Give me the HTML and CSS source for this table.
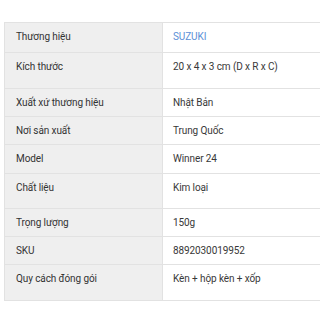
FILE: index.html
```html
<!DOCTYPE html>
<html lang="vi">
<head>
<meta charset="utf-8">
<link rel="stylesheet" href="styles.css">
</head>
<body>
<div class="specs">
  <div class="row r29"><div class="label">Thương hiệu</div><div class="value link">SUZUKI</div></div>
  <div class="row r36"><div class="label">Kích thước</div><div class="value">20 x 4 x 3 cm (D x R x C)</div></div>
  <div class="row r28"><div class="label">Xuất xứ thương hiệu</div><div class="value">Nhật Bản</div></div>
  <div class="row r28"><div class="label">Nơi sản xuất</div><div class="value">Trung Quốc</div></div>
  <div class="row r29"><div class="label">Model</div><div class="value">Winner 24</div></div>
  <div class="row r35"><div class="label">Chất liệu</div><div class="value">Kim loại</div></div>
  <div class="row r28"><div class="label">Trọng lượng</div><div class="value">150g</div></div>
  <div class="row r28"><div class="label">SKU</div><div class="value">8892030019952</div></div>
  <div class="row r36"><div class="label">Quy cách đóng gói</div><div class="value">Kèn + hộp kèn + xốp</div></div>
</div>
</body>
</html>
```
FILE: styles.css
```css
html, body {
  margin: 0;
  padding: 0;
  background: #ffffff;
}
body {
  padding: 22px 0 0 4px;
  font-family: Roboto, "Noto Sans", sans-serif;
  font-size: 10px;
  letter-spacing: -0.1px;
  overflow: hidden;
}
.specs {
  width: 330px;
  border: 1px solid #e2e2e2;
  border-right: none;
}
.row {
  display: flex;
  border-top: 1px solid #e2e2e2;
  box-sizing: border-box;
}
.row:first-child {
  border-top: none;
}
.r28 { height: 28px; }
.r29 { height: 29px; }
.r35 { height: 35px; }
.r36 { height: 36px; }
.label {
  width: 158px;
  flex: none;
  background: #efefef;
  border-right: 1px solid #e2e2e2;
  color: #333333;
  padding: 7px 0 0 11px;
  box-sizing: border-box;
  line-height: 13px;
}
.value {
  flex: 1;
  color: #383838;
  padding: 7px 0 0 10px;
  line-height: 13px;
}
.link {
  color: #5b8fd6;
}
```
